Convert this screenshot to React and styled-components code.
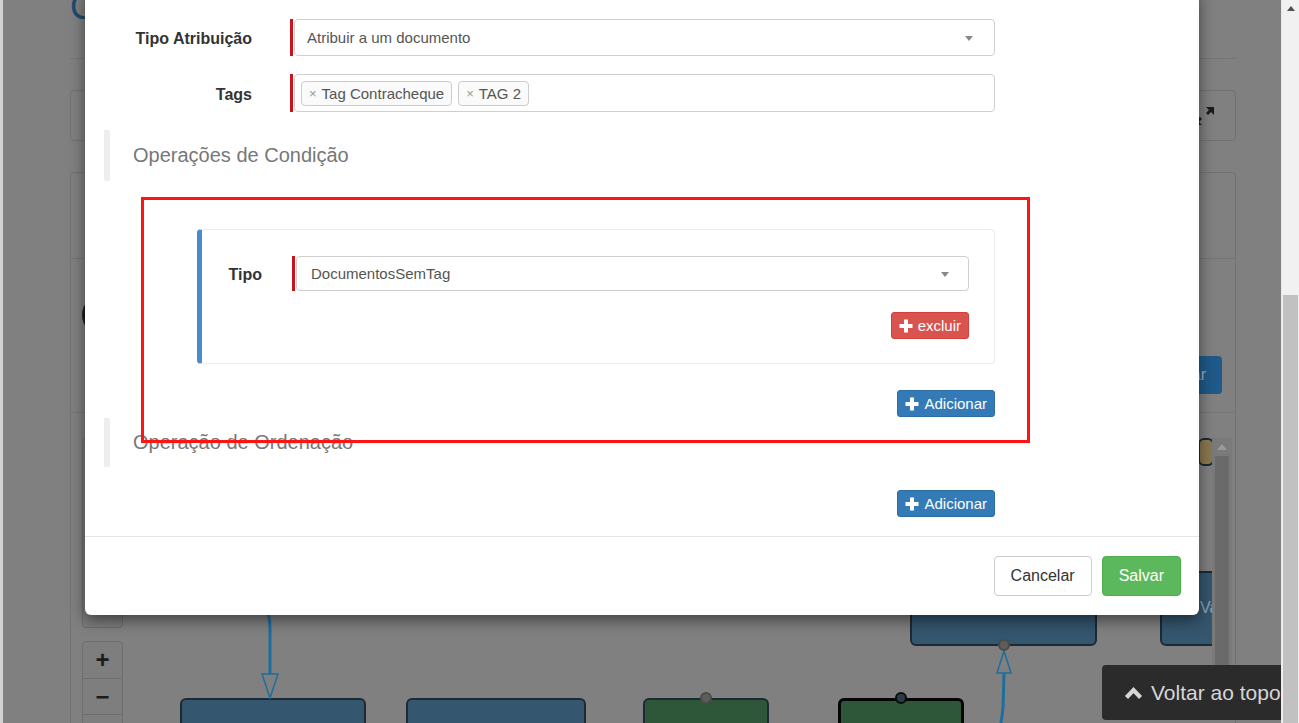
import React from "react";
import styled, { createGlobalStyle } from "styled-components";

const GlobalStyle = createGlobalStyle`
  html, body {
    margin: 0;
    padding: 0;
    overflow: hidden;
  }
  body {
    font-family: "Liberation Sans", Arial, sans-serif;
  }
  * {
    box-sizing: border-box;
  }
`;

const Screen = styled.div`
  display: flex;
  width: 1299px;
  height: 723px;
  overflow: hidden;
`;

const Viewport = styled.div`
  position: relative;
  flex: 1;
  height: 100%;
  overflow: hidden;
  background: #808080;
  border-left: 3px solid #d2d2d2;
`;

/* ---------- page behind the modal (already dimmed) ---------- */

const Page = styled.div`
  display: flex;
  flex-direction: column;
  height: 100%;
  padding: 0 45px 0 67px;
  & > * {
    flex-shrink: 0;
  }
`;

const PageTitle = styled.h1`
  margin: -13px 0 0;
  height: 40px;
  line-height: 40px;
  font-size: 36px;
  font-weight: 400;
  color: #1d4a72;
  white-space: nowrap;
  overflow: hidden;
`;

const TitleRule = styled.hr`
  margin: 31px 0 0;
  border: 0;
  border-top: 1px solid #757575;
`;

const Toolbar = styled.div`
  display: flex;
  align-items: center;
  justify-content: flex-end;
  margin-top: 31px;
  height: 51px;
  padding-right: 20px;
  border: 1px solid #727272;
  border-radius: 4px;
  color: #1b1b1b;
`;

const Panel = styled.div`
  display: flex;
  flex-direction: column;
  flex: 1 0 auto;
  margin-top: 31px;
  border: 1px solid #727272;
  border-bottom: 0;
  border-radius: 4px 4px 0 0;
  & > * {
    flex-shrink: 0;
  }
`;

const FilterRow = styled.div`
  height: 86px;
  border-bottom: 1px solid #747474;
`;

const FilterActions = styled.div`
  display: flex;
  justify-content: space-between;
  height: 154px;
  padding: 0 13px 18px 11px;
  border-bottom: 1px solid #767676;
`;

const Knob = styled.div`
  margin-top: 36px;
  width: 40px;
  height: 40px;
  border-radius: 50%;
  background: #1e1e1e;
`;

const PageButton = styled.div`
  align-self: flex-end;
  height: 38px;
  padding: 0 16px;
  line-height: 38px;
  font-size: 16px;
  color: #9fb0c0;
  background: #1f5a8a;
  border-radius: 4px;
`;

const Canvas = styled.div`
  display: flex;
  flex: 1 0 auto;
  padding: 25px 3px 0 11px;
`;

const Diagram = styled.div`
  position: relative;
  flex: 1;
  height: 300px;
  overflow: hidden;
`;

const Controls = styled.div`
  display: flex;
  flex-direction: column;
  gap: 13px;
  width: 41px;
`;

const Palette = styled.div`
  height: 190px;
  border: 1px solid #6c6c6c;
  border-radius: 4px;
  background: #7c7c7c;
`;

const ZoomGroup = styled.div`
  display: flex;
  flex-direction: column;
  border: 1px solid #6e6e6e;
  border-radius: 4px;
  background: #7e7e7e;
`;

const ZoomButton = styled.div`
  height: 36px;
  display: flex;
  align-items: center;
  justify-content: center;
  font-size: 24px;
  font-weight: 700;
  color: #1c1c1c;
  & + & {
    border-top: 1px solid #6e6e6e;
  }
`;

const Node = styled.div`
  position: absolute;
  border-radius: 6px;
  background: ${(p) => (p.$tone === "green" ? "#2d5738" : p.$tone === "tan" ? "#8a7850" : "#34566e")};
  border: ${(p) => (p.$bold ? "3px solid #050505" : "2px solid #1d2a33")};
  color: #8ea4b5;
  font-size: 16px;
  overflow: hidden;
  white-space: nowrap;
`;

const NodeText = styled.span`
  display: block;
  padding: 26px 0 0 38px;
`;

const Port = styled.div`
  position: absolute;
  width: 12px;
  height: 12px;
  margin: -6px 0 0 -6px;
  border-radius: 50%;
  background: ${(p) => (p.$dark ? "#2b3d4a" : "#5d5d5d")};
  border: 2px solid ${(p) => (p.$dark ? "#0b0b0b" : "#4a4a4a")};
`;

const Wires = styled.svg`
  position: absolute;
  left: 0;
  top: 0;
`;

const CanvasScroll = styled.div`
  display: flex;
  flex-direction: column;
  width: 20px;
  height: 238px;
  background: #7a7a7a;
`;

const CanvasScrollArrow = styled.div`
  height: 18px;
  display: flex;
  align-items: center;
  justify-content: center;
  &::before {
    content: "";
    border-style: solid;
    border-width: 0 5px 6px;
    border-color: transparent transparent #9a9a9a;
  }
`;

const CanvasScrollThumb = styled.div`
  flex: 1;
  margin: 0 3px;
  background: #6a6a6a;
`;

const BackToTop = styled.div`
  position: absolute;
  left: 1099px;
  top: 665px;
  width: 220px;
  height: 55px;
  display: flex;
  align-items: center;
  gap: 8px;
  padding-left: 22px;
  background: #2b2b2b;
  border-radius: 4px 0 0 4px;
  color: #d6d6d6;
  font-size: 21px;
  white-space: nowrap;
`;

/* ---------- modal ---------- */

const Modal = styled.div`
  position: absolute;
  left: 82px;
  top: -12px;
  width: 1114px;
  background: #fff;
  border-radius: 6px;
  box-shadow: 0 5px 15px rgba(0, 0, 0, 0.5);
`;

const ModalBody = styled.div`
  display: flex;
  flex-direction: column;
  padding: 31px 204px 19px 19px;
`;

const FormRow = styled.div`
  display: grid;
  grid-template-columns: ${(p) => p.$label}px 1fr;
  column-gap: ${(p) => p.$gap}px;
  align-items: center;
  margin-top: ${(p) => p.$top || 0}px;
`;

const Label = styled.label`
  padding-top: 3px;
  text-align: right;
  font-size: 16px;
  font-weight: 700;
  color: #333;
`;

const Required = styled.div`
  display: flex;
  border-left: 3px solid #c8141c;
  padding-left: 1px;
`;

const Select = styled.div`
  position: relative;
  flex: 1;
  height: ${(p) => p.$h}px;
  display: flex;
  align-items: center;
  padding-left: ${(p) => p.$pad}px;
  border: 1px solid #cfcfcf;
  border-radius: 4px;
  font-size: 15px;
  color: #555;
  &::after {
    content: "";
    position: absolute;
    right: ${(p) => p.$caret}px;
    top: 50%;
    margin-top: -2px;
    border-style: solid;
    border-width: 5px 4px 0;
    border-color: #888 transparent transparent;
  }
`;

const TagBox = styled.div`
  flex: 1;
  height: 38px;
  display: flex;
  gap: 6px;
  padding: 6px 6px 0;
  border: 1px solid #cfcfcf;
  border-radius: 4px;
`;

const Tag = styled.span`
  display: flex;
  align-items: center;
  gap: 5px;
  height: 25px;
  padding: 0 7px;
  border: 1px solid #cdcdcd;
  border-radius: 4px;
  background: #fafafa;
  font-size: 15px;
  color: #555;
`;

const TagRemove = styled.span`
  font-size: 13px;
  color: #999;
`;

const Section = styled.div`
  display: flex;
  align-items: center;
  height: ${(p) => p.$h}px;
  margin-top: ${(p) => p.$top}px;
  padding-left: 23px;
  border-left: 6px solid #eee;
  font-size: 20px;
  color: #777;
`;

const Card = styled.div`
  display: flex;
  flex-direction: column;
  align-items: flex-end;
  margin: 48px 0 0 93px;
  padding: 26px 25px 24px 0;
  border: 1px solid #ececec;
  border-left: 5px solid #4a8bc9;
  border-radius: 4px;
`;

const CardRow = styled(FormRow)`
  align-self: stretch;
`;

const SmallButton = styled.button`
  display: inline-flex;
  align-items: center;
  gap: 5px;
  height: 27px;
  padding: 0 7px;
  margin-top: ${(p) => p.$top}px;
  align-self: flex-end;
  border: 1px solid ${(p) => (p.$danger ? "#d43f3a" : "#2e6da4")};
  border-radius: 3px;
  background: ${(p) => (p.$danger ? "#d9534f" : "#337ab7")};
  color: #fff;
  font-family: inherit;
  font-size: 15px;
`;

const ModalFooter = styled.div`
  display: flex;
  justify-content: flex-end;
  gap: 10px;
  padding: 19px 18px 19px;
  border-top: 1px solid #e5e5e5;
`;

const FooterButton = styled.button`
  height: 40px;
  padding: 0 16px;
  border-radius: 4px;
  border: 1px solid ${(p) => (p.$primary ? "#4cae4c" : "#ccc")};
  background: ${(p) => (p.$primary ? "#5cb85c" : "#fff")};
  color: ${(p) => (p.$primary ? "#fff" : "#333")};
  font-family: inherit;
  font-size: 16px;
`;

const Highlight = styled.div`
  position: absolute;
  left: 138px;
  top: 197px;
  width: 889px;
  height: 246px;
  border: 3px solid #ff1414;
  pointer-events: none;
`;

/* ---------- browser scrollbar ---------- */

const WindowScrollbar = styled.div`
  display: flex;
  flex-direction: column;
  width: 18px;
  background: #f1f1f1;
  border-left: 1px solid #e9e9e9;
`;

const WindowScrollArrow = styled.div`
  height: 17px;
  display: flex;
  align-items: center;
  justify-content: center;
  &::before {
    content: "";
    border-style: solid;
    border-width: 0 4px 5px;
    border-color: transparent transparent #505050;
  }
`;

const WindowScrollThumb = styled.div`
  flex: 1;
  margin: 278px 1px 0;
  background: #c1c1c1;
`;

const PlusIcon = () => (
  <svg width="14" height="14" viewBox="0 0 14 14" aria-hidden="true">
    <path d="M5 0.5h4v4.5h4.5v4H9v4.5H5V9H0.5V5H5z" fill="currentColor" />
  </svg>
);

const ChevronUp = () => (
  <svg width="19" height="14" viewBox="0 0 19 14" aria-hidden="true">
    <polyline points="2.5,11.5 9.5,4 16.5,11.5" fill="none" stroke="currentColor" strokeWidth="4.2" />
  </svg>
);

const ExpandIcon = () => (
  <svg width="22" height="20" viewBox="0 0 22 20" aria-hidden="true">
    <path d="M13 1h8v8l-3-3-3 3-2-2 3-3z" fill="currentColor" />
    <path d="M9 19H1v-8l3 3 3-3 2 2-3 3z" fill="currentColor" />
  </svg>
);

const nodes = [
  { id: "a", left: 828, top: 123, width: 187, height: 85 },
  { id: "b", left: 1078, top: 133, width: 80, height: 75, text: "Validar" },
  { id: "c", left: 98, top: 260, width: 186, height: 60 },
  { id: "d", left: 324, top: 260, width: 180, height: 60 },
  { id: "e", left: 561, top: 260, width: 126, height: 60, tone: "green" },
  { id: "f", left: 756, top: 260, width: 126, height: 60, tone: "green", bold: true },
  { id: "g", left: 1116, top: 0, width: 16, height: 28, tone: "tan" },
];

const ports = [
  { id: "p1", x: 624, y: 260 },
  { id: "p2", x: 819, y: 260, dark: true },
  { id: "p3", x: 922, y: 207 },
];

const App = () => (
  <Screen>
    <GlobalStyle />
    <Viewport>
      <Page>
        <PageTitle>Configurações</PageTitle>
        <TitleRule />
        <Toolbar>
          <ExpandIcon />
        </Toolbar>
        <Panel>
          <FilterRow />
          <FilterActions>
            <Knob />
            <PageButton>Filtrar</PageButton>
          </FilterActions>
          <Canvas>
            <Diagram>
              <Controls>
                <Palette />
                <ZoomGroup>
                  <ZoomButton>+</ZoomButton>
                  <ZoomButton>−</ZoomButton>
                  <ZoomButton />
                </ZoomGroup>
              </Controls>
              {nodes.map((n) => (
                <Node
                  key={n.id}
                  $tone={n.tone}
                  $bold={n.bold}
                  style={{ left: n.left, top: n.top, width: n.width, height: n.height }}
                >
                  {n.text && <NodeText>{n.text}</NodeText>}
                </Node>
              ))}
              <Wires width="1130" height="300">
                <path d="M183 170 Q188 176 188 190 L188 236" fill="none" stroke="#1d6e9c" strokeWidth="3" />
                <polygon points="180,236 196,236 188,260" fill="#808080" stroke="#1d6e9c" strokeWidth="1.5" />
                <path d="M922 235 L921 270 Q920 280 918 290" fill="none" stroke="#1d6e9c" strokeWidth="3" />
                <polygon points="915,235 929,235 922,213" fill="#808080" stroke="#1d6e9c" strokeWidth="1.5" />
              </Wires>
              {ports.map((p) => (
                <Port key={p.id} $dark={p.dark} style={{ left: p.x, top: p.y }} />
              ))}
            </Diagram>
            <CanvasScroll>
              <CanvasScrollArrow />
              <CanvasScrollThumb />
            </CanvasScroll>
          </Canvas>
        </Panel>
      </Page>

      <BackToTop>
        <ChevronUp />
        Voltar ao topo
      </BackToTop>

      <Modal>
        <ModalBody>
          <FormRow $label={148} $gap={38}>
            <Label>Tipo Atribuição</Label>
            <Required>
              <Select $h={37} $pad={12} $caret={21}>
                Atribuir a um documento
              </Select>
            </Required>
          </FormRow>
          <FormRow $label={148} $gap={38} $top={18}>
            <Label>Tags</Label>
            <Required>
              <TagBox>
                <Tag>
                  <TagRemove>×</TagRemove>Tag Contracheque
                </Tag>
                <Tag>
                  <TagRemove>×</TagRemove>TAG 2
                </Tag>
              </TagBox>
            </Required>
          </FormRow>

          <Section $top={18} $h={51}>
            Operações de Condição
          </Section>

          <Card>
            <CardRow $label={60} $gap={30}>
              <Label>Tipo</Label>
              <Required>
                <Select $h={35} $pad={14} $caret={19}>
                  DocumentosSemTag
                </Select>
              </Required>
            </CardRow>
            <SmallButton $danger $top={21}>
              <PlusIcon />
              excluir
            </SmallButton>
          </Card>

          <SmallButton $top={26}>
            <PlusIcon />
            Adicionar
          </SmallButton>

          <Section $top={1} $h={49}>
            Operação de Ordenação
          </Section>

          <SmallButton $top={23}>
            <PlusIcon />
            Adicionar
          </SmallButton>
        </ModalBody>
        <ModalFooter>
          <FooterButton>Cancelar</FooterButton>
          <FooterButton $primary>Salvar</FooterButton>
        </ModalFooter>
      </Modal>

      <Highlight />
    </Viewport>
    <WindowScrollbar>
      <WindowScrollArrow />
      <WindowScrollThumb />
    </WindowScrollbar>
  </Screen>
);

export default App;
